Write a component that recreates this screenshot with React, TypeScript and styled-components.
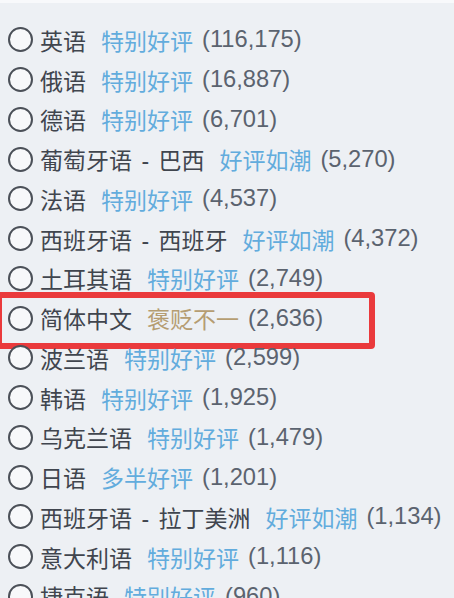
import React from "react";
import styled, { createGlobalStyle } from "styled-components";

const GlobalStyle = createGlobalStyle`
  html, body {
    margin: 0;
    padding: 0;
    background: #edf0f4;
    overflow: hidden;
  }
`;

type Tone = "positive" | "mixed";

interface Lang {
  name: string;
  rating: string;
  count: string;
  tone: Tone;
  highlighted?: boolean;
}

const languages: Lang[] = [
  { name: "英语", rating: "特别好评", count: "(116,175)", tone: "positive" },
  { name: "俄语", rating: "特别好评", count: "(16,887)", tone: "positive" },
  { name: "德语", rating: "特别好评", count: "(6,701)", tone: "positive" },
  { name: "葡萄牙语 - 巴西", rating: "好评如潮", count: "(5,270)", tone: "positive" },
  { name: "法语", rating: "特别好评", count: "(4,537)", tone: "positive" },
  { name: "西班牙语 - 西班牙", rating: "好评如潮", count: "(4,372)", tone: "positive" },
  { name: "土耳其语", rating: "特别好评", count: "(2,749)", tone: "positive" },
  { name: "简体中文", rating: "褒贬不一", count: "(2,636)", tone: "mixed", highlighted: true },
  { name: "波兰语", rating: "特别好评", count: "(2,599)", tone: "positive" },
  { name: "韩语", rating: "特别好评", count: "(1,925)", tone: "positive" },
  { name: "乌克兰语", rating: "特别好评", count: "(1,479)", tone: "positive" },
  { name: "日语", rating: "多半好评", count: "(1,201)", tone: "positive" },
  { name: "西班牙语 - 拉丁美洲", rating: "好评如潮", count: "(1,134)", tone: "positive" },
  { name: "意大利语", rating: "特别好评", count: "(1,116)", tone: "positive" },
  { name: "捷克语", rating: "特别好评", count: "(960)", tone: "positive" },
];

const Panel = styled.div`
  height: 598px;
  box-sizing: border-box;
  border-top: 3px solid #f8f9fb;
  padding: 17px 0 0 8px;
  font-family: "Liberation Sans", "Noto Sans CJK SC", sans-serif;
  font-size: 23px;
  overflow: hidden;
`;

const Row = styled.div<{ $highlighted?: boolean }>`
  position: relative;
  display: flex;
  align-items: center;
  height: 39.75px;
  white-space: nowrap;

  ${(p) =>
    p.$highlighted &&
    `
    &::after {
      content: "";
      position: absolute;
      left: -12px;
      top: -6px;
      width: 379px;
      height: 57px;
      box-sizing: border-box;
      border: 6px solid #ea3a3c;
      border-radius: 4px;
      pointer-events: none;
    }
  `}
`;

const Radio = styled.span`
  flex: none;
  width: 25px;
  height: 25px;
  box-sizing: border-box;
  border: 2px solid #4b5058;
  border-radius: 50%;
  background: #f7f8fa;
  margin-right: 7px;
`;

const Name = styled.span`
  color: #40454e;
  word-spacing: 3px;
`;

const Rating = styled.span<{ $tone: Tone }>`
  margin-left: 15px;
  color: ${(p) => (p.$tone === "mixed" ? "#b59d72" : "#62acdd")};
  font-family: "Noto Sans CJK SC", sans-serif;
`;

const Count = styled.span`
  margin-left: 9px;
  font-size: 23.7px;
  color: #5b636f;
`;

export default function App() {
  return (
    <>
      <GlobalStyle />
      <Panel>
        {languages.map((l) => (
          <Row key={l.name} $highlighted={l.highlighted}>
            <Radio />
            <Name>{l.name}</Name>
            <Rating $tone={l.tone}>{l.rating}</Rating>
            <Count>{l.count}</Count>
          </Row>
        ))}
      </Panel>
    </>
  );
}
